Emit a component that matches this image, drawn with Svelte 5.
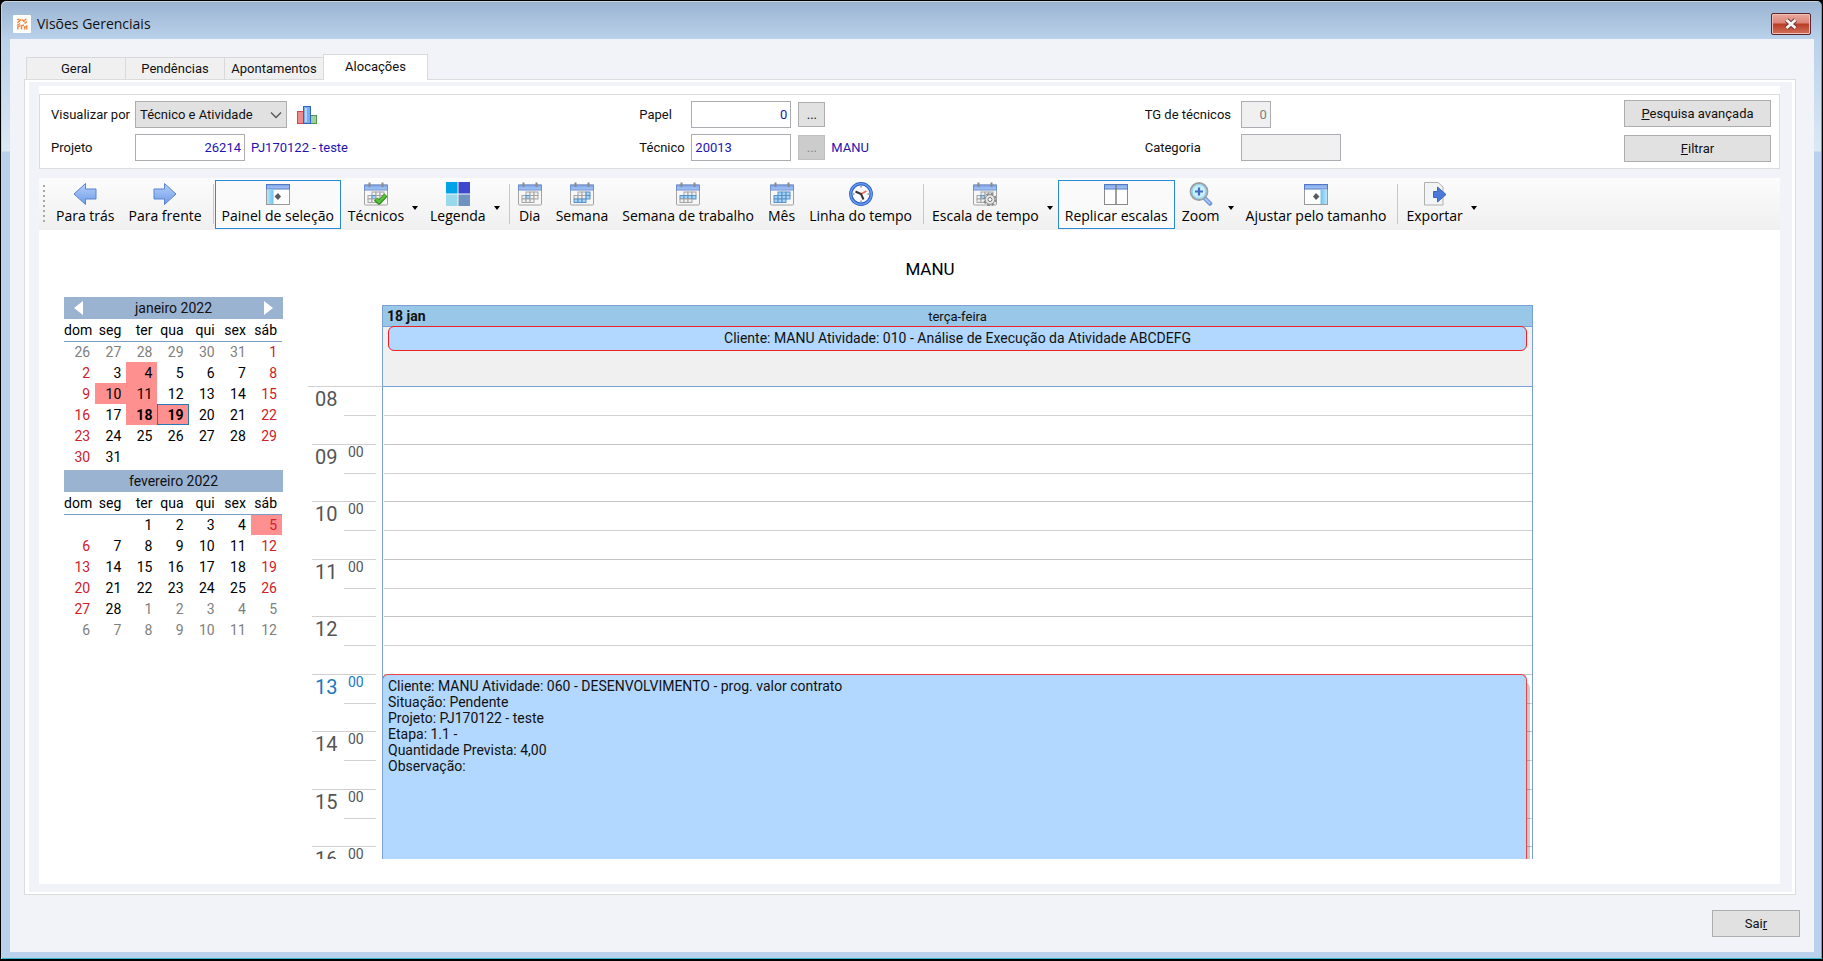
<script>
	let tabs = ["Geral", "Pendências", "Apontamentos", "Alocações"]
	let activeTab = "Alocações"
	let viewBy = "Técnico e Atividade"
	let project = "26214"
	let role = "0"
	let technician = "20013"

	let tools = [
		{ label: "Para trás", icon: "back" },
		{ label: "Para frente", icon: "forward" },
		{ sep: true },
		{ label: "Painel de seleção", icon: "panel", checked: true },
		{ label: "Técnicos", icon: "calCheck", drop: true },
		{ label: "Legenda", icon: "legend", drop: true },
		{ sep: true },
		{ label: "Dia", icon: "calDay" },
		{ label: "Semana", icon: "calWeek" },
		{ label: "Semana de trabalho", icon: "calWork" },
		{ label: "Mês", icon: "calMonth" },
		{ label: "Linha do tempo", icon: "clock" },
		{ sep: true },
		{ label: "Escala de tempo", icon: "calGear", drop: true },
		{ label: "Replicar escalas", icon: "columns", checked: true },
		{ label: "Zoom", icon: "zoom", drop: true },
		{ label: "Ajustar pelo tamanho", icon: "fit" },
		{ sep: true },
		{ label: "Exportar", icon: "export", drop: true },
	]

	// highlighted squares of the small month grid: 4 columns, 3 rows
	let calCells = {
		calDay: [5],
		calWeek: [3, 7, 8, 9, 10],
		calWork: [4, 5, 6, 7],
		calMonth: [1, 2, 3, 4, 5, 6, 7, 8, 9, 10],
		calCheck: [5],
		calGear: [5],
	}

	let weekdays = ["dom", "seg", "ter", "qua", "qui", "sex", "sáb"]

	// out: day of another month, busy: day with bookings
	function buildMonth(before, count, after, busy) {
		let days = []
		for (let d of before) days.push({ d, out: true })
		for (let d = 1; d <= count; d++) days.push({ d, busy: busy.includes(d) })
		for (let d = 1; d <= after; d++) days.push({ d, out: true })
		let weeks = []
		for (let i = 0; i < days.length; i += 7) weeks.push(days.slice(i, i + 7))
		return weeks
	}

	let months = [
		{ name: "janeiro 2022", nav: true, selected: [18, 19], today: 19, weeks: buildMonth([26, 27, 28, 29, 30, 31], 31, 0, [4, 10, 11, 18, 19]) },
		{ name: "fevereiro 2022", nav: false, selected: [], today: 0, weeks: buildMonth(["", ""], 28, 12, [5]) },
	]

	let hours = ["08", "09", "10", "11", "12", "13", "14", "15", "16"]
	let noMinutes = ["08", "12"]
	let currentHour = "13"

	let eventLines = [
		"Cliente: MANU Atividade: 060 - DESENVOLVIMENTO - prog. valor contrato",
		"Situação: Pendente",
		"Projeto: PJ170122 - teste",
		"Etapa: 1.1 -",
		"Quantidade Prevista: 4,00",
		"Observação:",
	]
</script>

{#snippet toolIcon(name)}
	<svg class="icon" viewBox="0 0 24 24" width="24" height="24" aria-hidden="true">
		{#if name == "back" || name == "forward"}
			<path transform={name == "forward" ? "translate(24 0) scale(-1 1)" : ""} d="M1 12 12.5 1.5V7H23V17H12.5V22.5Z" fill="url(#arrowBlue)" stroke="#5b83d0" stroke-width="1" stroke-linejoin="round" />
		{:else if name == "panel" || name == "fit"}
			<g transform={name == "fit" ? "translate(24 0) scale(-1 1)" : ""}>
				<rect x="0.5" y="3" width="23" height="19.5" fill="#fdfdfd" stroke="#9a9a9a" />
				<rect x="0.5" y="2.5" width="23" height="4.5" fill="url(#barBlue)" stroke="#5279c4" />
				<rect x="1" y="7.5" width="6.5" height="14.5" fill="url(#paneBlue)" />
				<path d="M8.5 14.5 12 11V18ZM12 11 15 14.5 12 18Z" fill="#5a5a5a" />
			</g>
		{:else if name.startsWith("cal")}
			<rect x="0.5" y="3" width="23" height="20" rx="1" fill="#f7f7f7" stroke="#a2a2a2" />
			<rect x="0.5" y="3" width="23" height="5" fill="url(#barBlue)" stroke="#6d8ed0" />
			<path d="M5.5 0.5V5M18.5 0.5V5" stroke="#8a8a8a" stroke-width="2" />
			{#each Array(12) as _, i}
				{#if i > 0 && i < 11}
					<rect x={4 + (i % 4) * 4} y={10 + Math.floor(i / 4) * 3.5} width="4" height="3.5" fill={calCells[name].includes(i) ? "#a5d4f7" : "#f0f0f0"} stroke={calCells[name].includes(i) ? "#5b91c7" : "#a5a5a5"} stroke-width="1" />
				{/if}
			{/each}
			{#if name == "calCheck"}
				<path d="M11.5 17 15 20.5 22 13" fill="none" stroke="#2f8f1c" stroke-width="4.5" stroke-linejoin="round" />
				<path d="M12 17 15 20 21.5 13.2" fill="none" stroke="#5cc03c" stroke-width="2.5" />
			{/if}
			{#if name == "calGear"}
				<circle cx="17" cy="17.5" r="5.8" fill="#e6e6e6" stroke="#8a8a8a" stroke-width="1.8" stroke-dasharray="2.6 1.95" />
				<circle cx="17" cy="17.5" r="4.8" fill="#e8e8e8" stroke="#8a8a8a" />
				<circle cx="17" cy="17.5" r="2" fill="#fff" stroke="#777" />
			{/if}
		{:else if name == "legend"}
			<rect x="0" y="0" width="11.5" height="11.5" fill="#00a2e8" />
			<rect x="12.5" y="0" width="11.5" height="11.5" fill="#3f48cc" />
			<rect x="0" y="12.5" width="11.5" height="11.5" fill="#99d9ea" />
			<rect x="12.5" y="12.5" width="11.5" height="11.5" fill="#7092be" />
		{:else if name == "clock"}
			<circle cx="12" cy="12" r="10.2" fill="#fdfdff" stroke="#2d62c8" stroke-width="3.4" />
			<circle cx="12" cy="12" r="10.4" fill="none" stroke="#6b9cf0" stroke-width="1.4" />
			<path d="M12 4V5.5M12 18.5V20M4 12H5.5M18.5 12H20" stroke="#555" />
			<path d="M12 12 17.5 9" stroke="#ef6a5c" stroke-width="1.6" />
			<path d="M6.5 9.5 12 12 14.5 17.5" fill="none" stroke="#333" stroke-width="2" />
		{:else if name == "columns"}
			<rect x="0.5" y="2.5" width="23" height="20" fill="#fdfdfd" stroke="#8a8a8a" />
			<rect x="0.5" y="2.5" width="23" height="4.5" fill="url(#barBlue)" stroke="#5279c4" />
			<path d="M12 2.5V22.5" stroke="#777" stroke-width="1.4" />
		{:else if name == "zoom"}
			<path d="M16 16.5 21 21.5" stroke="#6f93d8" stroke-width="4.5" stroke-linecap="round" />
			<path d="M16.5 17 20.5 21" stroke="#a9c4f3" stroke-width="2" stroke-linecap="round" />
			<circle cx="10" cy="9.5" r="8.5" fill="#cdeefc" stroke="#9a9fa6" stroke-width="1.8" />
			<circle cx="10" cy="9.5" r="6.8" fill="none" stroke="#7fd3ee" />
			<path d="M10 5.5V13.5M6 9.5H14" stroke="#3f6fc9" stroke-width="2.2" />
		{:else if name == "export"}
			<path d="M1.5 0.5H15L20 5V23H1.5Z" fill="#f3f4f6" stroke="#b0b0b0" />
			<path d="M10.5 9.5H14.5V5L23 12.5 14.5 20V15.5H10.5Z" fill="#4a79d8" stroke="#3c66bd" stroke-linejoin="round" />
		{/if}
	</svg>
{/snippet}

<svg class="defs" width="0" height="0" aria-hidden="true">
	<linearGradient id="arrowBlue" x1="0" y1="0" x2="0" y2="1">
		<stop offset="0" stop-color="#b4d0fb" />
		<stop offset="1" stop-color="#6f9be6" />
	</linearGradient>
	<linearGradient id="barBlue" x1="0" y1="0" x2="0" y2="1">
		<stop offset="0" stop-color="#7fa3e6" />
		<stop offset="1" stop-color="#a9c9f8" />
	</linearGradient>
	<linearGradient id="paneBlue">
		<stop offset="0" stop-color="#b9e4fb" />
		<stop offset="1" stop-color="#6ec3ef" />
	</linearGradient>
</svg>

<div class="window">
	<header class="titlebar">
		<svg class="logo" viewBox="0 0 18 18" width="18" height="18" aria-hidden="true">
			<rect width="18" height="18" rx="1" fill="#fff" />
			<path d="M4 4.5H6.5M4.5 8 8 4.5M9 4.5 11.5 7M11 5.5 13.5 4M11.5 8.5 14 6.5M4 10.5 7 8.5M4.8 14.5V12L7.5 10.5M8.5 14.5V11L11 10M11.7 14.5V12L13.8 11V14.5" fill="none" stroke="#f5843c" stroke-width="1.4" />
		</svg>
		<h1>Visões Gerenciais</h1>
		<button class="close" aria-label="Fechar">
			<svg viewBox="0 0 16 12" width="16" height="12" aria-hidden="true">
				<path d="M3.5 2 12.5 10M12.5 2 3.5 10" stroke="#6b3a3a" stroke-width="4.8" />
				<path d="M3.5 2 12.5 10M12.5 2 3.5 10" stroke="#f4f4f4" stroke-width="2.8" />
			</svg>
		</button>
	</header>

	<main class="client">
		<nav class="tabs">
			{#each tabs as tab}
				<button class="tab" class:active={tab == activeTab} on:click={() => (activeTab = tab)}>{tab}</button>
			{/each}
		</nav>

		<section class="page">
			<div class="inner">
				<form class="filters" on:submit|preventDefault>
					<div class="group">
						<label for="viewBy" class="wide">Visualizar por</label>
						<span class="combo">
							<select id="viewBy" bind:value={viewBy}>
								<option>Técnico e Atividade</option>
							</select>
							<svg class="chevron" viewBox="0 0 12 8" width="12" height="8" aria-hidden="true"><path d="M1 1.5 6 6.5 11 1.5" fill="none" stroke="#555" stroke-width="1.3" /></svg>
						</span>
						<svg class="chart" viewBox="0 0 20 18" width="20" height="18" aria-hidden="true">
							<rect x="0.5" y="5.5" width="6" height="12" fill="#f08a8a" stroke="#d9434c" />
							<rect x="13.5" y="9.5" width="6" height="8" fill="#9fd09a" stroke="#4c9a50" />
							<rect x="6.5" y="0.5" width="7" height="17" fill="#78aef0" stroke="#2f66c0" />
							<path d="M9 2V16" stroke="#b5d4fb" stroke-width="2" />
						</svg>
					</div>
					<div class="group">
						<label for="role">Papel</label>
						<input id="role" class="num" bind:value={role} />
						<button type="button" class="more" aria-label="Procurar papel">...</button>
					</div>
					<div class="group">
						<label for="tg" class="wider">TG de técnicos</label>
						<input id="tg" class="num tiny" value="0" disabled />
					</div>

					<div class="actions">
						<button type="button" class="push"><u>P</u>esquisa avançada</button>
						<button class="push"><u>F</u>iltrar</button>
					</div>

					<div class="group">
						<label for="project" class="wide">Projeto</label>
						<input id="project" class="num medium" bind:value={project} />
						<output for="project">PJ170122 - teste</output>
					</div>
					<div class="group">
						<label for="tech">Técnico</label>
						<input id="tech" bind:value={technician} />
						<button type="button" class="more" aria-label="Procurar técnico" disabled>...</button>
						<output for="tech">MANU</output>
					</div>
					<div class="group">
						<label for="category" class="wider">Categoria</label>
						<input id="category" disabled />
					</div>
				</form>

				<div class="toolbar" role="toolbar">
					<span class="grip"></span>
					{#each tools as tool}
						{#if tool.sep}
							<span class="sep"></span>
						{:else}
							<button class="tool" class:checked={tool.checked}>
								{@render toolIcon(tool.icon)}
								<span>{tool.label}</span>
							</button>
							{#if tool.drop}
								<button class="drop" aria-label={"Opções de " + tool.label}>
									<svg viewBox="0 0 6 4" width="6" height="4" aria-hidden="true"><path d="M0 0H6L3 4Z" fill="#000" /></svg>
								</button>
							{/if}
						{/if}
					{/each}
				</div>

				<div class="board">
					<h2>MANU</h2>
					<div class="columns">
						<aside>
							{#each months as month}
								<div class="month">
									<div class="monthName">
										{#if month.nav}
											<button aria-label="Mês anterior"><svg viewBox="0 0 9 14" width="9" height="14" aria-hidden="true"><path d="M9 0V14L0 7Z" fill="#fff" /></svg></button>
										{/if}
										<span>{month.name}</span>
										{#if month.nav}
											<button aria-label="Próximo mês"><svg viewBox="0 0 9 14" width="9" height="14" aria-hidden="true"><path d="M0 0V14L9 7Z" fill="#fff" /></svg></button>
										{/if}
									</div>
									<table class="days">
										<thead>
											<tr>
												{#each weekdays as w}
													<th>{w}</th>
												{/each}
											</tr>
										</thead>
										<tbody>
											{#each month.weeks as week}
												<tr>
													{#each week as day}
														<td class:out={day.out} class:busy={day.busy} class:selected={!day.out && month.selected.includes(day.d)} class:today={!day.out && day.d == month.today}>{day.d}</td>
													{/each}
												</tr>
											{/each}
										</tbody>
									</table>
								</div>
							{/each}
						</aside>

						<div class="scheduler">
							<div class="ruler">
								{#each hours as hour}
									<div class="hour" class:current={hour == currentHour}>
										<span class="hh">{hour}</span>
										<div class="mm">{noMinutes.includes(hour) ? "" : "00"}</div>
									</div>
								{/each}
							</div>
							<div class="day">
								<div class="dayHead">
									<b>18 jan</b>
									<span>terça-feira</span>
								</div>
								<div class="allDay">
									<div class="allDayEvent">Cliente: MANU Atividade: 010 - Análise de Execução da Atividade ABCDEFG</div>
								</div>
								<div class="slots">
									{#each hours as hour}
										<div class="slot"><div></div></div>
									{/each}
									<div class="event">
										{#each eventLines as line}
											<p>{line}</p>
										{/each}
									</div>
								</div>
							</div>
						</div>
					</div>
				</div>
			</div>
		</section>

		<footer>
			<button class="push exit">Sai<u>r</u></button>
		</footer>
	</main>
</div>

<style>
	:global(body) {
		background: #000;
	}
	* {
		box-sizing: border-box;
	}
	.defs {
		position: absolute;
	}
	.window {
		height: 100vh;
		padding: 1px 8px 7px 9px;
		border: 1px solid #000;
		border-bottom-width: 2px;
		border-radius: 6px 6px 0 0;
		display: flex;
		flex-direction: column;
		font-family: Roboto, sans-serif;
		font-size: 13px;
		color: #111;
		background: linear-gradient(#9ab3d1, #b9d1ea 38px, #dce8f5 150px, #b9d1ea 151px);
		box-shadow: inset 1px 1px 0 #c9d3de, inset -1px -1px 0 #35b5cc;
	}
	button, input, select {
		font: inherit;
		color: inherit;
		margin: 0;
	}
	.titlebar {
		height: 37px;
		flex: none;
		display: flex;
		align-items: center;
		padding: 6px 3px 0;
	}
	h1 {
		font: 14px "Open Sans", sans-serif;
		margin: 0 auto 0 6px;
	}
	.logo {
		display: block;
	}
	.close {
		width: 40px;
		height: 22px;
		padding: 0;
		border: 1px solid #5a2630;
		border-radius: 2px;
		background: linear-gradient(#e9a99f, #dc8577 45%, #b93b24 50%, #d2735c);
		box-shadow: inset 0 0 0 1px #f0bdb4;
		display: flex;
		align-items: center;
		justify-content: center;
	}
	.client {
		flex: 1;
		min-height: 0;
		display: flex;
		flex-direction: column;
		padding: 15px 18px 0 14px;
		background: #f2f3f8;
	}
	.tabs {
		display: flex;
		align-items: flex-end;
		padding-left: 2px;
		margin-bottom: -1px;
	}
	.tab {
		width: 99px;
		height: 23px;
		padding: 0;
		border: 1px solid #d9d9d9;
		border-right: 0;
		background: #f0f0f0;
	}
	.tab.active {
		width: 105px;
		height: 26px;
		padding-bottom: 3px;
		border-right: 1px solid #d9d9d9;
		border-bottom: 0;
		background: #fff;
		position: relative;
	}
	.page {
		flex: 1;
		min-height: 0;
		display: flex;
		border: 1px solid #dcdcdc;
		padding: 2px 3px 2px 4px;
		background: #fff;
	}
	.inner {
		flex: 1;
		min-width: 0;
		display: flex;
		flex-direction: column;
		padding: 4px 12px 8px 10px;
		background: #f2f3f8;
	}
	.filters {
		border: 1px solid #dcdcdc;
		box-shadow: 0 -8px 0 #fff;
		margin-top: 8px;
		padding: 6px 8px 7px 11px;
		display: grid;
		grid-template-columns: 588fr 505fr 479fr 147px;
		grid-auto-rows: 27px;
		row-gap: 6px;
		background: #fff;
	}
	.group {
		display: flex;
		align-items: center;
	}
	.actions {
		grid-column: 4;
		grid-row: 1 / 3;
		display: flex;
		flex-direction: column;
		justify-content: space-between;
		margin: -1px 0;
	}
	label {
		width: 52px;
	}
	label.wide {
		width: 84px;
	}
	label.wider {
		width: 96px;
	}
	input {
		width: 100px;
		height: 27px;
		padding: 2px 3px;
		border: 1px solid #abadb3;
		border-radius: 0;
		background: #fff;
		color: #1e14b4;
	}
	input:disabled {
		background: #f0f0f0;
		color: #808080;
	}
	.num {
		text-align: right;
	}
	.medium {
		width: 110px;
	}
	.tiny {
		width: 30px;
	}
	output {
		margin-left: 6px;
		color: #1e14b4;
	}
	.combo {
		position: relative;
		display: flex;
	}
	select {
		width: 152px;
		height: 27px;
		padding: 0 24px 0 4px;
		appearance: none;
		border: 1px solid #adadad;
		border-radius: 0;
		background: #e1e1e1;
	}
	.chevron {
		position: absolute;
		right: 5px;
		top: 10px;
	}
	.chart {
		margin-left: 10px;
	}
	.more {
		width: 27px;
		height: 25px;
		margin-left: 7px;
		padding: 0;
		border: 1px solid #adadad;
		background: #e1e1e1;
	}
	.more:disabled {
		background: #ccc;
		border-color: #bfbfbf;
		color: #838383;
	}
	.push {
		height: 27px;
		padding: 0;
		border: 1px solid #adadad;
		background: #e1e1e1;
	}
	.toolbar {
		height: 52px;
		margin-top: 9px;
		flex: none;
		display: flex;
		align-items: center;
		padding-left: 4px;
		background: linear-gradient(#fcfcfc, #f0f0f0);
		font: 14px "Open Sans", sans-serif;
		color: #000;
	}
	.grip {
		width: 2px;
		height: 38px;
		margin-right: 4px;
		background: repeating-linear-gradient(#a8a8a8 0 2px, transparent 2px 5px);
	}
	.sep {
		width: 1px;
		height: 40px;
		margin: 0 1px 0 4px;
		background: #c8c8c8;
	}
	.tool {
		height: 49px;
		padding: 1px 6px 0;
		border: 1px solid transparent;
		background: none;
		display: flex;
		flex-direction: column;
		align-items: center;
		line-height: 20px;
		white-space: nowrap;
	}
	.tool.checked {
		border-color: #2a8ad4;
		background: #fafafa;
	}
	.icon {
		display: block;
		flex: none;
	}
	.drop {
		width: 16px;
		height: 49px;
		margin-left: -4px;
		padding: 0;
		border: 0;
		background: none;
	}
	.board {
		flex: 1;
		min-height: 0;
		display: flex;
		flex-direction: column;
		padding: 0 247px 25px 25px;
		background: #fff;
	}
	h2 {
		margin: 28px 0 17px 263px;
		font: 17px/22px Roboto, sans-serif;
		text-align: center;
		color: #000;
	}
	.columns {
		flex: 1;
		min-height: 0;
		display: flex;
		gap: 25px;
	}
	aside {
		width: 219px;
		flex: none;
	}
	.month {
		margin-bottom: 3px;
	}
	.monthName {
		height: 22px;
		display: flex;
		align-items: center;
		padding: 0 10px;
		background: #9ab3d1;
		font-size: 14px;
	}
	.monthName span {
		flex: 1;
		text-align: center;
	}
	.monthName button {
		padding: 0;
		border: 0;
		background: none;
		display: flex;
	}
	.days {
		width: 218px;
		border-collapse: collapse;
		table-layout: fixed;
		font-size: 14px;
		line-height: 20px;
	}
	.days th {
		height: 22px;
		padding: 0 5px 0 0;
		border-bottom: 1px solid #7d9dc4;
		font-weight: normal;
		text-align: right;
		color: #000;
	}
	.days td {
		height: 21px;
		padding: 0 5px 0 0;
		text-align: right;
		color: #000;
	}
	.days td:nth-child(1), .days td:nth-child(7) {
		color: #d0202a;
	}
	.days td.busy {
		background: #ff9090;
	}
	.days td.out {
		color: #808080;
	}
	.days td.selected {
		font-weight: bold;
	}
	.days td.today {
		outline: 1px solid #2a78b8;
		outline-offset: -1px;
	}
	.scheduler {
		flex: 1;
		min-width: 0;
		display: flex;
		margin-top: 8px;
		overflow: hidden;
	}
	.ruler {
		width: 74px;
		flex: none;
		padding-top: 81px;
		color: #555;
	}
	.hour {
		height: 57px;
		display: flex;
		margin: 0 6px 0 4px;
		border-top: 1px solid #d0d0d0;
	}
	.hour:first-child {
		margin: 0;
		padding: 0 6px 0 4px;
	}
	.hour:nth-child(odd), .slot:nth-child(odd) {
		height: 58px;
	}
	.hh {
		width: 32px;
		padding-left: 3px;
		font-size: 20px;
		line-height: 24px;
	}
	.mm {
		flex: 1;
		height: 29px;
		padding-left: 4px;
		border-bottom: 1px solid #d0d0d0;
		font-size: 14px;
		line-height: 15px;
	}
	.current {
		color: #1a78c0;
	}
	.day {
		flex: 1;
		min-width: 0;
		display: flex;
		flex-direction: column;
		border: 1px solid #7ba0d4;
		border-bottom: 0;
	}
	.dayHead {
		height: 21px;
		flex: none;
		display: flex;
		align-items: center;
		border-bottom: 1px solid #7ba0d4;
		background: #99c7e7;
	}
	.dayHead b {
		width: 80px;
		margin-right: -80px;
		padding-left: 4px;
		font-size: 14px;
	}
	.dayHead span {
		flex: 1;
		text-align: center;
	}
	.allDay {
		height: 60px;
		flex: none;
		padding: 0 5px;
		border-bottom: 1px solid #7ba0d4;
		background: #f0f0f0;
	}
	.allDayEvent {
		height: 25px;
		margin-top: -1px;
		border: 1px solid #f02020;
		border-radius: 6px;
		background: #b2d8ff;
		font-size: 14px;
		line-height: 23px;
		text-align: center;
	}
	.slots {
		position: relative;
		flex: 1;
		min-height: 0;
		overflow: hidden;
		background: #fff;
		margin-left: -1px;
		padding-left: 1px;
		border-left: 1px solid #7ba0d4;
	}
	.slot {
		height: 57px;
		border-bottom: 1px solid #c4c4c4;
	}
	.slot div {
		height: 29px;
		border-bottom: 1px solid #d0d0d0;
	}
	.event {
		position: absolute;
		top: 287px;
		left: -1px;
		right: 5px;
		bottom: 0;
		padding: 3px 5px;
		border: 1px solid #f04040;
		border-bottom: 0;
		border-radius: 6px 6px 0 0;
		background: #b2d8ff;
		box-shadow: 3px 8px 0 rgba(0, 0, 0, 0.2);
		font-size: 14px;
	}
	.event p {
		margin: 0;
		line-height: 16px;
	}
	footer {
		flex: none;
		display: flex;
		justify-content: flex-end;
		padding: 15px 0;
		margin-right: -4px;
	}
	.exit {
		width: 88px;
	}
</style>
